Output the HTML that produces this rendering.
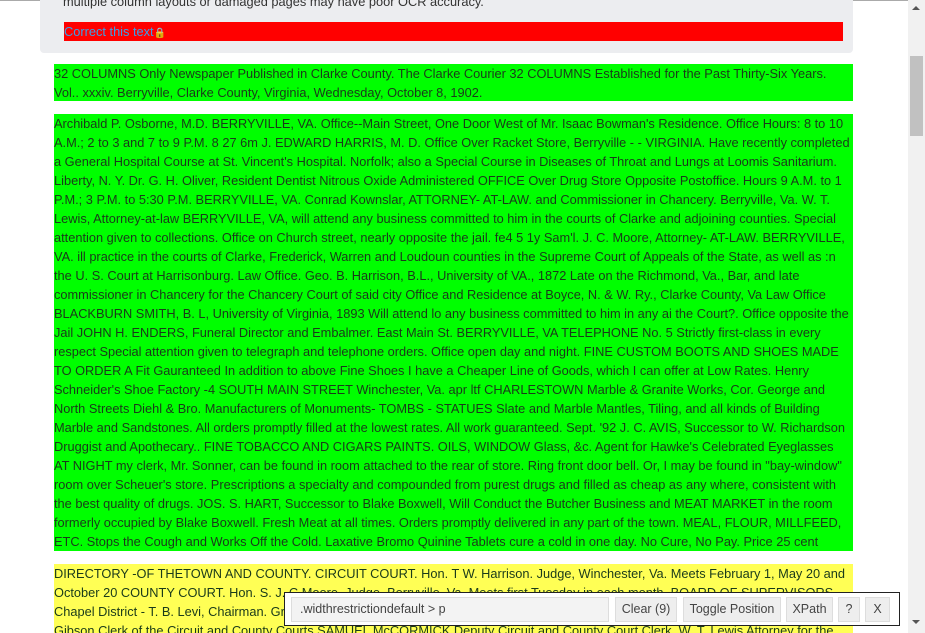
<!DOCTYPE html>
<html><head><meta charset="utf-8"><style>
*{margin:0;padding:0;box-sizing:border-box}
html,body{width:925px;height:633px;overflow:hidden}
body{background:#fff;font-family:"Liberation Sans",Arial,sans-serif;font-size:12.8px;color:#222;position:relative}
.topline{position:absolute;left:0;top:0;width:908px;height:1px;background:#aaa}
.gray{position:absolute;left:40px;top:0;width:813px;height:53px;background:#ecedf0;border-radius:0 0 4px 4px;overflow:hidden}
.gray .t{position:absolute;left:23px;top:-6px;white-space:nowrap;color:#333}
.red{position:absolute;left:64px;top:22px;width:779px;height:19px;background:#f00;color:#3aa0e8;line-height:19px;white-space:nowrap}
.blk{position:absolute;left:54px;width:799px;line-height:19px;white-space:nowrap;color:#1a3a1a;overflow:visible}
.g{background:#00ff00}
.y{background:#ffff55}
.sb{position:absolute;left:908px;top:0;width:17px;height:633px;background:#f1f1f1}
.th{position:absolute;left:910px;top:56px;width:13px;height:80px;background:#c1c1c1}
.panel{position:absolute;left:284px;top:592px;width:616px;height:34px;background:#fff;border:1px solid #222}
.b{position:absolute;top:4px;height:25px;background:#eee;border:1px solid #ddd;line-height:23px;text-align:center;color:#444;font-size:12.5px}
</style></head><body>
<div class="topline"></div>
<div class="gray"><div class="t">multiple column layouts or damaged pages may have poor OCR accuracy.</div></div>
<div class="red">Correct this text<span style="color:#d9a441;font-size:10px">🔒</span></div>
<div class="blk g" style="top:64px;height:37px">32 COLUMNS Only Newspaper Published in Clarke County. The Clarke Courier 32 COLUMNS Established for the Past Thirty-Six Years.<br>Vol.. xxxiv. Berryville, Clarke County, Virginia, Wednesday, October 8, 1902.</div>
<div class="blk g" style="top:114px;height:437px">Archibald P. Osborne, M.D. BERRYVILLE, VA. Office--Main Street, One Door West of Mr. Isaac Bowman's Residence. Office Hours: 8 to 10<br>A.M.; 2 to 3 and 7 to 9 P.M. 8 27 6m J. EDWARD HARRIS, M. D. Office Over Racket Store, Berryville - - VIRGINIA. Have recently completed<br>a General Hospital Course at St. Vincent's Hospital. Norfolk; also a Special Course in Diseases of Throat and Lungs at Loomis Sanitarium.<br>Liberty, N. Y. Dr. G. H. Oliver, Resident Dentist Nitrous Oxide Administered OFFICE Over Drug Store Opposite Postoffice. Hours 9 A.M. to 1<br>P.M.; 3 P.M. to 5:30 P.M. BERRYVILLE, VA. Conrad Kownslar, ATTORNEY- AT-LAW. and Commissioner in Chancery. Berryville, Va. W. T.<br>Lewis, Attorney-at-law BERRYVILLE, VA, will attend any business committed to him in the courts of Clarke and adjoining counties. Special<br>attention given to collections. Office on Church street, nearly opposite the jail. fe4 5 1y Sam'l. J. C. Moore, Attorney- AT-LAW. BERRYVILLE,<br>VA. ill practice in the courts of Clarke, Frederick, Warren and Loudoun counties in the Supreme Court of Appeals of the State, as well as :n<br>the U. S. Court at Harrisonburg. Law Office. Geo. B. Harrison, B.L., University of VA., 1872 Late on the Richmond, Va., Bar, and late<br>commissioner in Chancery for the Chancery Court of said city Office and Residence at Boyce, N. &amp; W. Ry., Clarke County, Va Law Office<br>BLACKBURN SMITH, B. L, University of Virginia, 1893 Will attend lo any business committed to him in any ai the Court?. Office opposite the<br>Jail JOHN H. ENDERS, Funeral Director and Embalmer. East Main St. BERRYVILLE, VA TELEPHONE No. 5 Strictly first-class in every<br>respect Special attention given to telegraph and telephone orders. Office open day and night. FINE CUSTOM BOOTS AND SHOES MADE<br>TO ORDER A Fit Gauranteed In addition to above Fine Shoes I have a Cheaper Line of Goods, which I can offer at Low Rates. Henry<br>Schneider's Shoe Factory -4 SOUTH MAIN STREET Winchester, Va. apr ltf CHARLESTOWN Marble &amp; Granite Works, Cor. George and<br>North Streets Diehl &amp; Bro. Manufacturers of Monuments- TOMBS - STATUES Slate and Marble Mantles, Tiling, and all kinds of Building<br>Marble and Sandstones. All orders promptly filled at the lowest rates. All work guaranteed. Sept. '92 J. C. AVIS, Successor to W. Richardson<br>Druggist and Apothecary.. FINE TOBACCO AND CIGARS PAINTS. OILS, WINDOW Glass, &amp;c. Agent for Hawke's Celebrated Eyeglasses<br>AT NIGHT my clerk, Mr. Sonner, can be found in room attached to the rear of store. Ring front door bell. Or, I may be found in "bay-window"<br>room over Scheuer's store. Prescriptions a specialty and compounded from purest drugs and filled as cheap as any where, consistent with<br>the best quality of drugs. JOS. S. HART, Successor to Blake Boxwell, Will Conduct the Butcher Business and MEAT MARKET in the room<br>formerly occupied by Blake Boxwell. Fresh Meat at all times. Orders promptly delivered in any part of the town. MEAL, FLOUR, MILLFEED,<br>ETC. Stops the Cough and Works Off the Cold. Laxative Bromo Quinine Tablets cure a cold in one day. No Cure, No Pay. Price 25 cent</div>
<div class="blk y" style="top:564px;height:80px">DIRECTORY -OF THETOWN AND COUNTY. CIRCUIT COURT. Hon. T W. Harrison. Judge, Winchester, Va. Meets February 1, May 20 and<br>October 20 COUNTY COURT. Hon. S. J. C Moore, Judge, Berryville, Va. Meets first Tuesday in each month. BOARD OF SUPERVISORS<br>Chapel District - T. B. Levi, Chairman. Greenway District - W. Meade. Battletown District - J. H. Burwell, Longmarsh District<br>Gibson Clerk of the Circuit and County Courts SAMUEL McCORMICK Deputy Circuit and County Court Clerk. W. T. Lewis Attorney for the</div>
<div class="sb"></div>
<div class="th"></div>
<div style="position:absolute;left:912px;top:6px;width:0;height:0;border-left:4px solid transparent;border-right:4px solid transparent;border-bottom:4px solid #555"></div>
<div style="position:absolute;left:912px;top:620px;width:0;height:0;border-left:4px solid transparent;border-right:4px solid transparent;border-top:4px solid #555"></div>
<div class="panel">
<div class="b" style="left:6px;width:318px;text-align:left;padding-left:8px;background:#f3f3f3">.widthrestrictiondefault &gt; p</div>
<div class="b" style="left:330px;width:62px">Clear (9)</div>
<div class="b" style="left:398px;width:98px">Toggle Position</div>
<div class="b" style="left:501px;width:47px">XPath</div>
<div class="b" style="left:553px;width:22px">?</div>
<div class="b" style="left:580px;width:25px">X</div>
</div>
</body></html>
